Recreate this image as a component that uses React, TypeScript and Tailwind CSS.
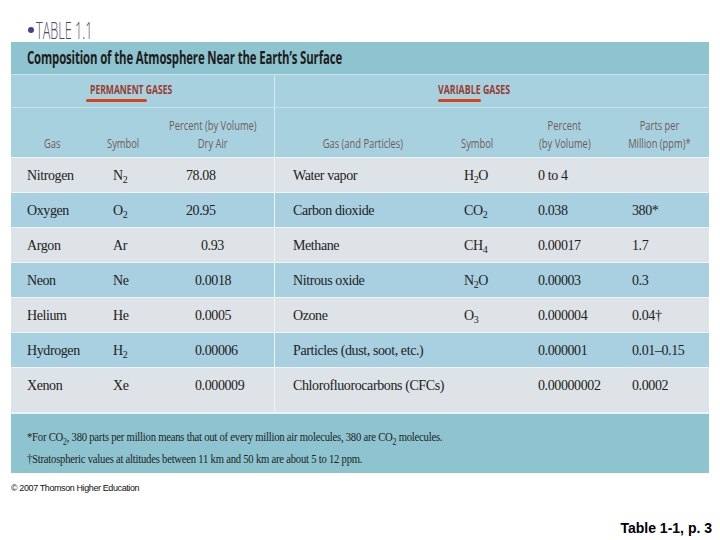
import React from "react";

const SERIF = { fontFamily: '"Liberation Serif", "Times New Roman", serif' };
const SANS = { fontFamily: '"Open Sans", "DejaVu Sans", sans-serif' };

type Row = { g: React.ReactNode; s: React.ReactNode; p: string; pp?: string; vg: string; vs?: React.ReactNode; vp: string; vm?: string; light: boolean; tall?: boolean };

const Sub = ({ children }: { children: React.ReactNode }) => (
  <span className="text-[10px] relative top-[4px]">{children}</span>
);

const rows: Row[] = [
  { g: "Nitrogen", s: <>N<Sub>2</Sub></>, p: "78.08", vg: "Water vapor", vs: <>H<Sub>2</Sub>O</>, vp: "0 to 4", vm: "", light: true },
  { g: "Oxygen", s: <>O<Sub>2</Sub></>, p: "20.95", vg: "Carbon dioxide", vs: <>CO<Sub>2</Sub></>, vp: "0.038", vm: "380*", light: false },
  { g: "Argon", s: "Ar", p: "0.93", pp: "pl-[31px]", vg: "Methane", vs: <>CH<Sub>4</Sub></>, vp: "0.00017", vm: "1.7", light: true },
  { g: "Neon", s: "Ne", p: "0.0018", pp: "pl-[25px]", vg: "Nitrous oxide", vs: <>N<Sub>2</Sub>O</>, vp: "0.00003", vm: "0.3", light: false },
  { g: "Helium", s: "He", p: "0.0005", pp: "pl-[25px]", vg: "Ozone", vs: <>O<Sub>3</Sub></>, vp: "0.000004", vm: "0.04†", light: true },
  { g: "Hydrogen", s: <>H<Sub>2</Sub></>, p: "0.00006", pp: "pl-[25px]", vg: "Particles (dust, soot, etc.)", vp: "0.000001", vm: "0.01–0.15", light: false },
  { g: "Xenon", s: "Xe", p: "0.000009", pp: "pl-[25px]", vg: "Chlorofluorocarbons (CFCs)", vp: "0.00000002", vm: "0.0002", light: true, tall: true },
];

export default function App() {
  return (
    <div className="w-[720px] h-[540px] bg-white relative overflow-hidden">
      {/* TABLE 1.1 label */}
      <div className="h-[42px] flex items-end pl-[28px]">
        <span className="w-[6px] h-[6px] rounded-full bg-[#4f3c8c] mr-[2px] mb-[9px]" />
        <span className="inline-block origin-left scale-x-[0.55] text-[23px] leading-[24px] text-[#4e4868] whitespace-nowrap" style={{ ...SANS, fontWeight: 300 }}>TABLE 1.1</span>
      </div>

      <div className="ml-[11px] w-[698px]">
        {/* Title band */}
        <div className="h-[32px] bg-[#8ec4cf] flex items-center pl-[16px]">
          <span className="inline-block origin-left scale-x-[0.67] whitespace-nowrap text-[17px] font-bold text-[#1d1d1d] tracking-[-0.2px]" style={SANS}>
            Composition of the Atmosphere Near the Earth’s Surface
          </span>
        </div>
        {/* Section row */}
        <div className="h-[33px] bg-[#a8d1df] flex border-t border-[#c6e2ea]">
          <div className="w-[264px] border-r border-[#d6ecf2] relative">
            <span className="absolute left-[79px] top-[5px] inline-block origin-left scale-x-[0.66] whitespace-nowrap text-[13px] font-bold text-[#9a3b30]" style={SANS}>PERMANENT GASES</span>
            <span className="absolute left-[75px] top-[24px] w-[61px] h-[3px] rounded-full bg-[#d9411b]" />
          </div>
          <div className="flex-1 relative">
            <span className="absolute left-[163px] top-[5px] inline-block origin-left scale-x-[0.68] whitespace-nowrap text-[13px] font-bold text-[#9a3b30]" style={SANS}>VARIABLE GASES</span>
            <span className="absolute left-[163px] top-[24px] w-[43px] h-[3px] rounded-full bg-[#d9411b]" />
          </div>
        </div>
        {/* Column header row */}
        <div className="h-[50px] bg-[#a8d1df] flex items-end border-t border-[#c6e2ea] text-[13px] text-[#6e5d58] leading-[18px] whitespace-nowrap" style={SANS}>
          <div className="w-[89px] pl-[33px] pb-[5px]"><span className="inline-block origin-left scale-x-[0.72]">Gas</span></div>
          <div className="w-[70px] pl-[7px] pb-[5px]"><span className="inline-block origin-left scale-x-[0.72]">Symbol</span></div>
          <div className="w-[105px] h-full border-r border-[#d6ecf2] flex flex-col justify-end items-center pr-[18px] pb-[5px]">
            <span className="inline-block scale-x-[0.72]">Percent (by Volume)</span>
            <span className="inline-block scale-x-[0.72]">Dry Air</span>
          </div>
          <div className="w-[175px] flex justify-center pb-[5px]"><span className="inline-block scale-x-[0.72]">Gas (and Particles)</span></div>
          <div className="w-[75px] pl-[11px] pb-[5px]"><span className="inline-block origin-left scale-x-[0.72]">Symbol</span></div>
          <div className="w-[95px] flex flex-col items-center pr-[16px] pb-[5px]">
            <span className="inline-block scale-x-[0.72]">Percent</span>
            <span className="inline-block scale-x-[0.72]">(by Volume)</span>
          </div>
          <div className="w-[89px] flex flex-col items-center pr-[10px] pb-[5px]">
            <span className="inline-block scale-x-[0.72]">Parts per</span>
            <span className="inline-block scale-x-[0.72]">Million (ppm)*</span>
          </div>
        </div>
        {/* Data rows */}
        <div className="text-[14px] text-[#222] tracking-[-0.4px] whitespace-nowrap" style={SERIF}>
          {rows.map((r, i) => (
            <div
              key={i}
              className={`flex items-start border-t border-[#eef5f7] ${r.light ? "bg-[#dde3e6]" : "bg-[#a9d0e0]"} ${r.tall ? "h-[45px]" : "h-[35px]"}`}
            >
              <div className="w-[89px] h-[34px] pl-[16px] flex items-center">{r.g}</div>
              <div className="w-[70px] h-[34px] pl-[13px] flex items-center">{r.s}</div>
              <div className={`w-[105px] h-full ${r.pp ?? "pl-[16px]"} border-r border-[#eef5f7]`}>
                <div className="h-[34px] flex items-center">{r.p}</div>
              </div>
              <div className="w-[175px] h-[34px] pl-[18px] flex items-center">{r.vg}</div>
              <div className="w-[75px] h-[34px] pl-[14px] flex items-center">{r.vs}</div>
              <div className="w-[95px] h-[34px] pl-[13px] flex items-center">{r.vp}</div>
              <div className="w-[89px] h-[34px] pl-[12px] flex items-center">{r.vm}</div>
            </div>
          ))}
        </div>
        {/* Footnotes */}
        <div className="h-[61px] bg-[#8ec4cf] border-t-2 border-[#e8f4f6] pl-[16px] pt-[12px] text-[13.5px] leading-[21px] text-[#1f1f1f] tracking-[-0.3px] whitespace-nowrap" style={SERIF}>
          <div className="origin-left scale-x-[0.79]">*For CO<Sub>2</Sub>, 380 parts per million means that out of every million air molecules, 380 are CO<Sub>2</Sub> molecules.</div>
          <div className="origin-left scale-x-[0.79]">†Stratospheric values at altitudes between 11 km and 50 km are about 5 to 12 ppm.</div>
        </div>
      </div>

      {/* Copyright */}
      <div className="ml-[11px] mt-[11px] text-[9px] leading-none text-[#111] tracking-[-0.4px]" style={{ fontFamily: '"Liberation Sans", Arial, sans-serif' }}>
        © 2007 Thomson Higher Education
      </div>

      <div className="absolute right-[8px] top-[521px] text-[14px] font-bold text-black leading-none" style={{ fontFamily: '"Liberation Sans", Arial, sans-serif' }}>
        Table 1-1, p. 3
      </div>
    </div>
  );
}
